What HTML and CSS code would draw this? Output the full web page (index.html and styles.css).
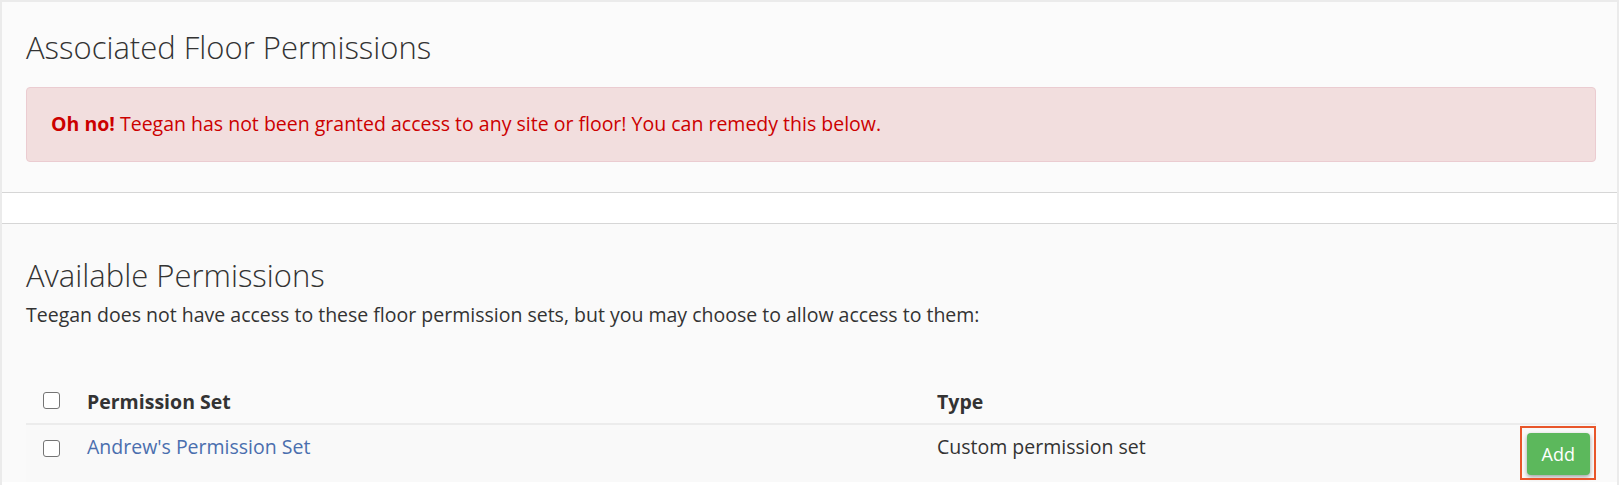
FILE: index.html
```html
<!DOCTYPE html>
<html lang="en">
<head>
  <meta charset="UTF-8">
  <meta name="viewport" content="width=device-width, initial-scale=1.0">
  <title>Floor Permissions</title>
  <link rel="stylesheet" href="styles.css">
</head>
<body>
  <div class="page">
    <section class="panel panel-associated">
      <h2 class="panel-title">Associated Floor Permissions</h2>
      <div class="alert alert-danger">
        <strong>Oh no!</strong> Teegan has not been granted access to any site or floor! You can remedy this below.
      </div>
    </section>

    <div class="spacer"></div>

    <section class="panel panel-available">
      <h2 class="panel-title">Available Permissions</h2>
      <p class="panel-intro">Teegan does not have access to these floor permission sets, but you may choose to allow access to them:</p>

      <table class="perm-table">
        <thead>
          <tr>
            <th class="col-check"><input type="checkbox" aria-label="Select all"></th>
            <th class="col-name">Permission Set</th>
            <th class="col-type">Type</th>
            <th class="col-action"></th>
          </tr>
        </thead>
        <tbody>
          <tr>
            <td class="col-check"><input type="checkbox" aria-label="Select Andrew's Permission Set"></td>
            <td class="col-name"><a href="#">Andrew's Permission Set</a></td>
            <td class="col-type">Custom permission set</td>
            <td class="col-action"><button type="button" class="btn-add">Add</button></td>
          </tr>
        </tbody>
      </table>
    </section>
  </div>
</body>
</html>
```

FILE: styles.css
```css
html,
body {
  height: 100%;
}
body {
  font-family: 'Open Sans', 'Noto Sans', Arial, sans-serif;
  font-size: 19.5px;
  line-height: 27px;
  color: #333;
  background-color: #ebebeb;
  margin: 0;
  padding: 2px 2px 0 2px;
  box-sizing: border-box;
}
.page {
  background-color: #fff;
  min-height: 100%;
}
.panel {
  background-color: #fbfbfb;
  padding: 0 21px 0 24px;
}
.panel-associated {
  padding-top: 28px;
  padding-bottom: 30px;
  border-bottom: 1px solid #d6d6d6;
}
.spacer {
  height: 30px;
  background-color: #fff;
}
.panel-available {
  border-top: 1px solid #d6d6d6;
  padding-top: 34px;
  background-color: #fafafa;
}
.panel-title {
  font-size: 31px;
  font-weight: 300;
  line-height: 1.1;
  margin: 0;
  color: #333;
}
.alert {
  margin-top: 23px;
  padding: 22px 24px 24px;
  border: 1px solid #ebccd1;
  border-radius: 4px;
  background-color: #f2dede;
  color: #cc0000;
}
.alert strong {
  font-weight: 700;
}
.panel-intro {
  margin: 9px 0 52px;
}
.perm-table {
  width: 100%;
  border-collapse: collapse;
}
.perm-table th,
.perm-table td {
  padding: 8px;
  text-align: left;
  vertical-align: top;
}
.perm-table th {
  font-weight: 700;
  border-bottom: 2px solid #ececec;
}
.perm-table tbody tr {
  background-color: #f9f9f9;
}
.perm-table td {
  padding-bottom: 7px;
}
.col-check {
  width: 28px;
  padding-left: 17px !important;
}
.col-name {
  width: 834px;
}
.col-action {
  text-align: right !important;
  padding-right: 6px !important;
}
.perm-table a {
  color: #4a6eae;
  text-decoration: none;
}
input[type="checkbox"] {
  appearance: none;
  -webkit-appearance: none;
  width: 17px;
  height: 17px;
  margin: 2px 0 0;
  border: 1.5px solid #747474;
  border-radius: 3px;
  background-color: #fff;
  box-sizing: border-box;
}
.perm-table td input[type="checkbox"] {
  margin-top: 7px;
}
.btn-add {
  position: relative;
  font-family: inherit;
  font-size: 18px;
  line-height: 24px;
  padding: 9px 15px;
  color: #fff;
  background-color: #5cb85c;
  border: none;
  border-radius: 4px;
  box-shadow: 0 2px 4px rgba(0, 0, 0, 0.35);
  cursor: pointer;
}
/* highlight box drawn round the button */
.btn-add::after {
  content: "";
  position: absolute;
  top: -7px;
  left: -7px;
  right: -6px;
  bottom: -5px;
  border: 2px solid #e8562a;
}
```
